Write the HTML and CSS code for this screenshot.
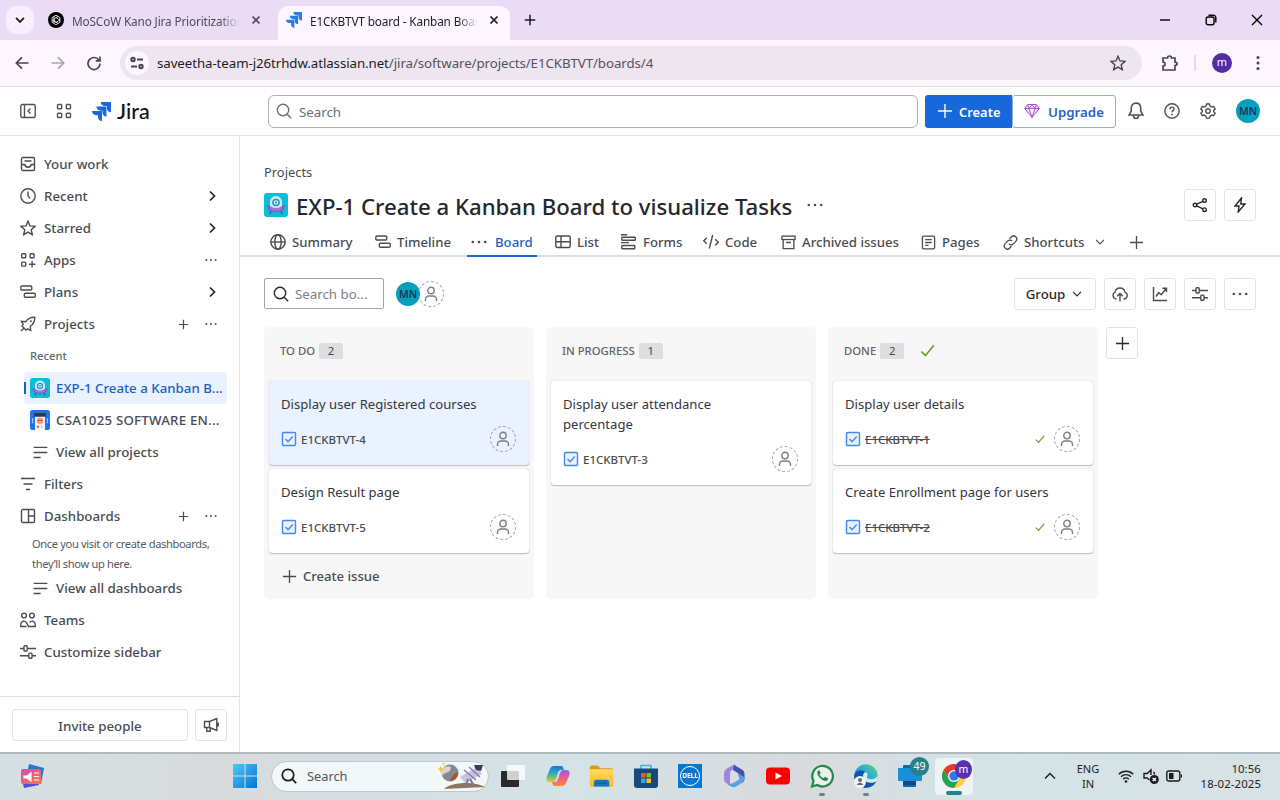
FILE: index.html
```html
<!DOCTYPE html>
<html lang="en">
<head>
<meta charset="utf-8">
<title>E1CKBTVT board - Kanban Board - Jira</title>
<link rel="stylesheet" href="styles.css">
</head>
<body>
<svg class="sprite" aria-hidden="true">
  <defs>
    <linearGradient id="wn" x1="0" y1="0" x2="1" y2="1"><stop offset="0" stop-color="#4cc8f8"/><stop offset="1" stop-color="#0473d4"/></linearGradient>
    <linearGradient id="fold" x1="0" y1="0" x2="0" y2="1"><stop offset="0" stop-color="#ffd968"/><stop offset="1" stop-color="#fcb924"/></linearGradient>
    <linearGradient id="edg" x1="0" y1="1" x2="1" y2="0"><stop offset="0" stop-color="#0f5eb0"/><stop offset="0.5" stop-color="#2aa5dc"/><stop offset="1" stop-color="#5fd878"/></linearGradient>
    <linearGradient id="m365" x1="0" y1="0" x2="1" y2="1"><stop offset="0" stop-color="#a58be8"/><stop offset="0.5" stop-color="#4a55b8"/><stop offset="1" stop-color="#62bdf2"/></linearGradient>
    <linearGradient id="cpa" x1="0" y1="0" x2="0" y2="1"><stop offset="0" stop-color="#1a6fe8"/><stop offset="0.5" stop-color="#2cb5b8"/><stop offset="1" stop-color="#e8c526"/></linearGradient>
    <linearGradient id="cpb" x1="0" y1="0" x2="0" y2="1"><stop offset="0" stop-color="#9a5ae8"/><stop offset="0.5" stop-color="#ee5a8c"/><stop offset="1" stop-color="#f58a3c"/></linearGradient>
    <linearGradient id="nws" x1="0" y1="0" x2="1" y2="1"><stop offset="0" stop-color="#d14bb5"/><stop offset="1" stop-color="#fb7a45"/></linearGradient>
  </defs>
  <symbol id="jira" viewBox="0 0 20 20"><g fill="currentColor" stroke="none"><path d="M9.200 0H20v10.800a4.700 4.700 0 0 1-4.300-4.600V4.300h-1.900A4.700 4.700 0 0 1 9.200 0z"/><path d="M4.600 4.800h10.600v10.600a4.700 4.700 0 0 1-4.200-4.600V9.100H9.200a4.700 4.700 0 0 1-4.600-4.300z"/><path d="M0 9.600h10.500V20a4.700 4.700 0 0 1-4.200-4.600v-1.500H4.600A4.700 4.700 0 0 1 0 9.600z"/></g></symbol>
  <symbol id="chev-d" viewBox="0 0 16 16"><path d="M3.500 5.500 8 10.200l4.500-4.700"/></symbol>
  <symbol id="chev-r" viewBox="0 0 16 16"><path d="m6 3.500 4.500 4.500L6 12.500"/></symbol>
  <symbol id="x" viewBox="0 0 16 16"><path d="m4 4 8 8M12 4l-8 8"/></symbol>
  <symbol id="plus" viewBox="0 0 16 16"><path d="M8 1v14M1 8h14"/></symbol>
  <symbol id="dots" viewBox="0 0 16 16"><g fill="currentColor" stroke="none"><circle cx="1.800" cy="8" r="1.300"/><circle cx="8" cy="8" r="1.300"/><circle cx="14.200" cy="8" r="1.300"/></g></symbol>
  <symbol id="search" viewBox="0 0 16 16"><circle cx="7" cy="7" r="5.700"/><path d="m11.200 11.200 4 4"/></symbol>
  <symbol id="star" viewBox="0 0 16 16"><path d="m8 1.200 2 4.700 5 .5-3.800 3.300 1.100 5L8 12.100l-4.300 2.600 1.100-5L1 6.400l5-.5z"/></symbol>
  <symbol id="inbox" viewBox="0 0 16 16"><rect x="1.500" y="1.500" width="13" height="13" rx="1.500"/><path d="M4.500 5h7M1.500 8.500h3.300c.4 2 1.500 2.700 3.200 2.700s2.800-.7 3.200-2.700h3.300"/></symbol>
  <symbol id="clock" viewBox="0 0 16 16"><circle cx="8" cy="8" r="7.200"/><path d="M8 3.500V8l2 2.200"/></symbol>
  <symbol id="grid" viewBox="0 0 16 16"><rect x="1.500" y="1.500" width="4.200" height="4.200" rx=".8"/><rect x="10.300" y="1.500" width="4.200" height="4.200" rx=".8"/><rect x="1.500" y="10.300" width="4.200" height="4.200" rx=".8"/><rect x="10.300" y="10.300" width="4.200" height="4.200" rx=".8"/></symbol>
  <symbol id="apps" viewBox="0 0 16 16"><rect x="1.700" y="1.700" width="4" height="4" rx=".8"/><rect x="10.100" y="1.700" width="4" height="4" rx=".8"/><rect x="1.700" y="10.100" width="4" height="4" rx=".8"/><path d="M12.100 9v6.400M8.900 12.200h6.400"/></symbol>
  <symbol id="plans" viewBox="0 0 16 16"><rect x=".8" y="2" width="11" height="4" rx="1.200"/><rect x="4.300" y="9.200" width="11" height="4" rx="1.200"/></symbol>
  <symbol id="rocket" viewBox="0 0 16 16"><path d="M14.700 1.300c-4.500-.3-6.800 1.300-9 4.400L1.500 5.300l1.700 3L2 10l4 4 1.700-1.200 3 1.700-.4-4.200c3.100-2.200 4.700-4.500 4.400-9zM4 11.900 1 14.900"/><circle cx="10.800" cy="5.200" r="1" fill="currentColor" stroke="none"/></symbol>
  <symbol id="lines" viewBox="0 0 16 16"><path d="M.7 2.500h14.600M.7 8h14.600M.7 13.300h7.500"/></symbol>
  <symbol id="filter" viewBox="0 0 16 16"><path d="M1 2.500h14M3.500 8h9M6 13.500h4"/></symbol>
  <symbol id="dash" viewBox="0 0 16 16"><rect x="1.500" y="1.500" width="13" height="13" rx="1.300"/><path d="M8.500 1.500v13M8.500 8h6"/></symbol>
  <symbol id="teams" viewBox="0 0 16 16"><circle cx="4" cy="3.500" r="2.400"/><circle cx="12" cy="3.500" r="2.400"/><path d="M6.500 14.500H.8V12a3 3 0 0 1 5.600-1.300l2.200 3.800h6.600V12a3 3 0 0 0-5.600-1.300"/></symbol>
  <symbol id="sliders" viewBox="0 0 16 16"><path d="M0 4.500h4M7.500 4.500H16M0 11.800h8.500M12 11.800h4"/><rect x="4" y="1.800" width="3.200" height="5.200" rx=".8"/><rect x="8.800" y="9.100" width="3.200" height="5.200" rx=".8"/></symbol>
  <symbol id="horn" viewBox="0 0 16 16"><path d="M1.500 4.500h5L13.800 1.500v12L6.500 10.500h-5zM6.500 4.500v6M3.700 10.500v3.800h3.500v-3.500M15.200 5.500v4"/></symbol>
  <symbol id="collapse" viewBox="0 0 16 16"><rect x=".8" y="1.500" width="14.400" height="13" rx="1.500"/><path d="M4.500 1.500v13M10.500 5.500 8 8l2.500 2.500"/></symbol>
  <symbol id="bell" viewBox="0 0 16 16"><path d="M8 1c2.700 0 4.200 1.900 4.200 4.500v2.700l2 3.300H1.800l2-3.300V5.500C3.800 2.900 5.300 1 8 1zM5.600 11.800c0 1.800 1 2.800 2.400 2.800s2.400-1 2.400-2.800"/></symbol>
  <symbol id="help" viewBox="0 0 16 16"><circle cx="8" cy="8" r="7.200"/><path d="M5.900 6.300c0-1.400.9-2.200 2.100-2.200s2.100.8 2.100 2c0 1.500-2.100 1.500-2.100 3.100"/><circle cx="8" cy="11.500" r=".9" fill="currentColor" stroke="none"/></symbol>
  <symbol id="gear" viewBox="0 0 16 16"><circle cx="8" cy="8" r="2.200"/><path d="M6.500 1h3l.5 2 1.700 1 2-.7 1.500 2.700L13.700 7.400v1.300l1.500 1.400-1.500 2.600-2-.6-1.700 1-.5 2h-3l-.5-2-1.700-1-2 .6L.8 10.100l1.500-1.400V7.400L.8 6l1.500-2.700 2 .7L6 3z"/></symbol>
  <symbol id="globe" viewBox="0 0 16 16"><circle cx="8" cy="8" r="7.200"/><ellipse cx="8" cy="8" rx="3.200" ry="7.200"/><path d="M.8 8h14.400"/></symbol>
  <symbol id="list" viewBox="0 0 16 16"><rect x=".8" y="2" width="14.400" height="11.500" rx="1.500"/><path d="M.8 7.700h14.400M6 2v11.500"/></symbol>
  <symbol id="forms" viewBox="0 0 16 16"><path d="M0 .8h6M0 8.600h8"/><rect x=".8" y="3.300" width="13.500" height="3" rx=".6"/><rect x=".8" y="11.500" width="13" height="3.300" rx=".6"/></symbol>
  <symbol id="code" viewBox="0 0 16 16"><path d="M3.800 3.800.8 6.800l3 3M12.200 5.200l3 3-3 3M9.700 1 6.300 14.500"/></symbol>
  <symbol id="archive" viewBox="0 0 16 16"><rect x="1" y="1.200" width="14" height="3.600"/><path d="M2.300 4.800v9.700h11.400V4.800M5.500 8h5"/></symbol>
  <symbol id="page" viewBox="0 0 16 16"><rect x="1.500" y="1.200" width="13" height="13.600" rx="1.500"/><path d="M4.500 5h7M4.500 8h7M4.500 11h3.500"/></symbol>
  <symbol id="link" viewBox="0 0 16 16"><path d="m7 4 1.800-1.900a3.300 3.300 0 0 1 5 4.400L11 9.500a3.200 3.200 0 0 1-4.700 0M9 12l-1.800 1.900a3.300 3.300 0 0 1-5-4.400L5 6.500a3.200 3.200 0 0 1 4.700 0"/></symbol>
  <symbol id="share" viewBox="0 0 16 16"><circle cx="3" cy="8" r="1.800"/><circle cx="12.500" cy="3.500" r="1.800"/><circle cx="12.500" cy="12.700" r="1.800"/><path d="m4.700 7.200 6.200-2.900M4.700 8.800l6.200 3"/></symbol>
  <symbol id="bolt" viewBox="0 0 16 16"><path d="M9.500 1 3 9h4l-.8 6L13 7H8.800z"/></symbol>
  <symbol id="cloud" viewBox="0 0 16 16"><path d="M4.500 13A3.600 3.600 0 0 1 3 6.200a5.100 5.100 0 0 1 10-.1 3.600 3.600 0 0 1-1.500 6.900M8 15.500V7.800M5.200 10.300 8 7.500l2.800 2.800"/></symbol>
  <symbol id="chart" viewBox="0 0 16 16"><path d="M1.500 1v13.500H15M4 10.500l2.700-4 2.600 2.300 4.900-6.300M10.500 2.300h4v4"/></symbol>
  <symbol id="person" viewBox="0 0 16 16"><circle cx="8" cy="4.500" r="3.200"/><path d="M2.500 15v-1.500a3.500 3.500 0 0 1 3.500-3.500h4a3.500 3.500 0 0 1 3.500 3.500V15"/></symbol>
  <symbol id="tick" viewBox="0 0 16 16"><path d="m1.500 9 4.300 4.500L14.800 2.500"/></symbol>
  <symbol id="task" viewBox="0 0 16 16"><rect x="1.500" y="1.500" width="13" height="13" rx="1" fill="#e9f2fe"/><path d="m4.500 8 2.600 2.800 4.600-5.300"/></symbol>
  <symbol id="alien" viewBox="0 0 24 24"><rect width="24" height="24" rx="3" fill="#0cbcdb"/><path d="m7 18-1 3M17 18l1 3" stroke="#5a46a5" stroke-width="1.500"/><path d="M3 11.500q2 1 3 .5h12q1 .5 3-.5c.5 5-3 8-9 8s-9.500-3-9-8z" fill="#7566c6"/><path d="M6 14V9a6 6 0 0 1 12 0v5q-6 4-12 0z" fill="#c6f1fa"/><circle cx="12" cy="9.500" r="3.800" fill="#3189b8"/><circle cx="12" cy="9.500" r="2.300" fill="#d7f6ff"/><circle cx="12" cy="9.500" r="1.100" fill="#3189b8"/><path d="M6 13q6 4 12 0v3q-6 4-12 0z" fill="#9a78d8"/></symbol>
  <symbol id="phone" viewBox="0 0 24 24"><rect width="24" height="24" rx="3" fill="#1f73ea"/><path d="M6 24V5a2 2 0 0 1 2-2h8a2 2 0 0 1 2 2v19z" fill="#f2f4fa"/><path d="M5 8V5a2 2 0 0 1 2-2h10a2 2 0 0 1 2 2v3z" fill="#253858"/><circle cx="12" cy="13" r="4" fill="#ff9580"/><circle cx="10.500" cy="12.500" r=".8" fill="#803030"/><circle cx="13.500" cy="12.500" r=".8" fill="#803030"/><path d="M3.500 10q-1.500 3 0 6M20.500 10q1.500 3 0 6" stroke="#a9d2ff" stroke-width="1.300" fill="none"/><circle cx="9.500" cy="20" r="1.400" fill="#f04438"/><circle cx="14" cy="20" r="1" fill="#8cbdc0"/></symbol>
</svg>

<div class="tabstrip">
  <div class="tab-search"><svg class="i s14 w2"><use href="#chev-d"/></svg></div>
  <div class="btab btab-idle">
    <svg class="gpt" viewBox="0 0 16 16"><circle cx="8" cy="8" r="8" fill="#000"/><g fill="none" stroke="#fff" stroke-width=".8"><path d="M8 3.200l3.900 2.300v4.800L8 12.700l-3.900-2.400V5.500z"/><path d="M6 4.400V9l4.200 2.400M10 4.400 5.900 6.800v4.600M4 8l4 2.300L12.100 8M8 5.600 12 8"/></g></svg>
    <span class="btab-title">MoSCoW Kano Jira Prioritization</span>
    <svg class="i s14 w2"><use href="#x"/></svg>
  </div>
  <div class="btab btab-active">
    <svg class="i s16 fav"><use href="#jira"/></svg>
    <span class="btab-title">E1CKBTVT board - Kanban Board</span>
    <svg class="i s14 w2"><use href="#x"/></svg>
  </div>
  <svg class="i newtab w2"><use href="#plus"/></svg>
  <div class="winctl">
    <svg class="i s12" viewBox="0 0 12 12"><path d="M1 6h10"/></svg>
    <svg class="i s12" viewBox="0 0 12 12"><rect x="1.200" y="3" width="7.800" height="7.800" rx="1.800"/><path d="M3.500 1.200h5a2.300 2.300 0 0 1 2.300 2.300v5"/></svg>
    <svg class="i s12" viewBox="0 0 12 12"><path d="m1 1 10 10M11 1 1 11"/></svg>
  </div>
</div>

<div class="toolbar">
  <svg class="i s16" viewBox="0 0 16 16"><path d="M14.500 8H2.500M8 2.300 2.300 8 8 13.700"/></svg>
  <svg class="i s16 dim" viewBox="0 0 16 16"><path d="M1.500 8h12M8 2.300 13.700 8 8 13.700"/></svg>
  <svg class="i s16" viewBox="0 0 16 16"><path d="M13 5.200A6 6 0 1 0 14 8.500M14 1.500v4.300H9.700"/></svg>
  <div class="omni">
    <span class="site"><svg class="i s14 w2" viewBox="0 0 14 14"><circle cx="3" cy="3.500" r="1.700"/><path d="M7 3.500h6M1 10.500h6"/><circle cx="11" cy="10.500" r="1.700"/></svg></span>
    <span class="url"><b>saveetha-team-j26trhdw.atlassian.net</b>/jira/software/projects/E1CKBTVT/boards/4</span>
    <svg class="i s16"><use href="#star"/></svg>
  </div>
  <svg class="i ext" viewBox="0 0 18 18"><path d="M2 4h4.500c0-2.700 4-2.700 4 0H14v4.200c2.700 0 2.700 3.300 0 3.300V16H2v-3.800c2.700 0 2.700-4.200 0-4.200z"/></svg>
  <span class="sep"></span>
  <span class="me">m</span>
  <svg class="i kebab" viewBox="0 0 4 16"><g fill="currentColor" stroke="none"><circle cx="2" cy="2.500" r="1.500"/><circle cx="2" cy="8" r="1.500"/><circle cx="2" cy="13.500" r="1.500"/></g></svg>
</div>

<header class="nav">
  <svg class="i s16"><use href="#collapse"/></svg>
  <svg class="i s16 nav-grid"><use href="#grid"/></svg>
  <div class="brand"><svg class="brand-mark"><use href="#jira"/></svg><span>Jira</span></div>
  <div class="gsearch"><svg class="i s16"><use href="#search"/></svg><span>Search</span></div>
  <div class="create"><svg class="i s16"><use href="#plus"/></svg><span>Create</span></div>
  <div class="upgrade"><svg class="i gem" viewBox="0 0 16 16"><path fill="#eed7fc" d="M3.500 1.500h9L15.300 5.500 8 14.500.7 5.500zM.7 5.500h14.600M5 5.500l3 9 3-9M3.500 1.500 5 5.500l3-4 3 4 1.500-4"/></svg><span>Upgrade</span></div>
  <svg class="i s18"><use href="#bell"/></svg>
  <svg class="i s16 nav-help"><use href="#help"/></svg>
  <svg class="i s16 nav-gear"><use href="#gear"/></svg>
  <span class="mn">MN</span>
</header>

<div class="body">
  <aside class="side">
    <nav class="menu">
      <div class="row"><svg class="i s16"><use href="#inbox"/></svg><span>Your work</span></div>
      <div class="row"><svg class="i s16"><use href="#clock"/></svg><span>Recent</span><svg class="i s16 end arrow"><use href="#chev-r"/></svg></div>
      <div class="row"><svg class="i s16"><use href="#star"/></svg><span>Starred</span><svg class="i s16 end arrow"><use href="#chev-r"/></svg></div>
      <div class="row"><svg class="i s16"><use href="#apps"/></svg><span>Apps</span><svg class="i s12 end more"><use href="#dots"/></svg></div>
      <div class="row"><svg class="i s16"><use href="#plans"/></svg><span>Plans</span><svg class="i s16 end arrow"><use href="#chev-r"/></svg></div>
      <div class="row"><svg class="i s16"><use href="#rocket"/></svg><span>Projects</span><svg class="i s11 end"><use href="#plus"/></svg><svg class="i s12 more"><use href="#dots"/></svg></div>
      <div class="row sub-label">Recent</div>
      <div class="row sub picked"><svg class="ava"><use href="#alien"/></svg><span>EXP-1 Create a Kanban B...</span></div>
      <div class="row sub wide"><svg class="ava"><use href="#phone"/></svg><span>CSA1025 SOFTWARE EN...</span></div>
      <div class="row sub all"><svg class="i s15"><use href="#lines"/></svg><span>View all projects</span></div>
      <div class="row"><svg class="i s16"><use href="#filter"/></svg><span>Filters</span></div>
      <div class="row"><svg class="i s16"><use href="#dash"/></svg><span>Dashboards</span><svg class="i s11 end"><use href="#plus"/></svg><svg class="i s12 more"><use href="#dots"/></svg></div>
      <p class="hint">Once you visit or create dashboards,<br>they’ll show up here.</p>
      <div class="row sub all"><svg class="i s15"><use href="#lines"/></svg><span>View all dashboards</span></div>
      <div class="row"><svg class="i s16"><use href="#teams"/></svg><span>Teams</span></div>
      <div class="row"><svg class="i s16"><use href="#sliders"/></svg><span>Customize sidebar</span></div>
    </nav>
    <div class="side-foot"><div class="invite">Invite people</div><div class="sq"><svg class="i s16"><use href="#horn"/></svg></div></div>
  </aside>

  <main class="main">
    <div class="crumb">Projects</div>
    <div class="title-row">
      <svg class="proj"><use href="#alien"/></svg>
      <h1>EXP-1 Create a Kanban Board to visualize Tasks</h1>
      <svg class="i s16 title-dots"><use href="#dots"/></svg>
      <div class="sq dark push"><svg class="i s16"><use href="#share"/></svg></div>
      <div class="sq dark"><svg class="i s16"><use href="#bolt"/></svg></div>
    </div>
    <div class="tabs">
      <div class="tab t-summary"><svg class="i s16"><use href="#globe"/></svg>Summary</div>
      <div class="tab t-timeline"><svg class="i s16"><use href="#plans"/></svg>Timeline</div>
      <div class="tab t-board"><svg class="i s16"><use href="#dots"/></svg>Board</div>
      <div class="tab t-list"><svg class="i s16"><use href="#list"/></svg>List</div>
      <div class="tab t-forms"><svg class="i s16"><use href="#forms"/></svg>Forms</div>
      <div class="tab t-code"><svg class="i s16"><use href="#code"/></svg>Code</div>
      <div class="tab t-arch"><svg class="i s15"><use href="#archive"/></svg>Archived issues</div>
      <div class="tab t-pages"><svg class="i s15"><use href="#page"/></svg>Pages</div>
      <div class="tab t-short"><svg class="i s15"><use href="#link"/></svg>Shortcuts<svg class="i s14 short-chev"><use href="#chev-d"/></svg></div>
      <svg class="i s15"><use href="#plus"/></svg>
    </div>
    <div class="tools">
      <div class="bsearch"><svg class="i s16"><use href="#search"/></svg><span>Search bo...</span></div>
      <div class="people"><span class="mn">MN</span><span class="anon"><svg class="i s16"><use href="#person"/></svg></span></div>
      <div class="group">Group<svg class="i s14"><use href="#chev-d"/></svg></div>
      <div class="sq"><svg class="i s16"><use href="#cloud"/></svg></div>
      <div class="sq"><svg class="i s16"><use href="#chart"/></svg></div>
      <div class="sq"><svg class="i s16"><use href="#sliders"/></svg></div>
      <div class="sq"><svg class="i s16"><use href="#dots"/></svg></div>
    </div>
    <div class="board">
      <section class="col">
        <div class="col-head">TO DO<span class="count">2</span></div>
        <article class="card sel"><div class="card-title">Display user Registered courses</div><div class="meta"><svg class="i s16 task"><use href="#task"/></svg><span class="key">E1CKBTVT-4</span><span class="anon"><svg class="i s16"><use href="#person"/></svg></span></div></article>
        <article class="card"><div class="card-title">Design Result page</div><div class="meta"><svg class="i s16 task"><use href="#task"/></svg><span class="key">E1CKBTVT-5</span><span class="anon"><svg class="i s16"><use href="#person"/></svg></span></div></article>
        <div class="new-issue"><svg class="i s15"><use href="#plus"/></svg>Create issue</div>
      </section>
      <section class="col">
        <div class="col-head">IN PROGRESS<span class="count">1</span></div>
        <article class="card"><div class="card-title">Display user attendance percentage</div><div class="meta"><svg class="i s16 task"><use href="#task"/></svg><span class="key">E1CKBTVT-3</span><span class="anon"><svg class="i s16"><use href="#person"/></svg></span></div></article>
      </section>
      <section class="col">
        <div class="col-head">DONE<span class="count">2</span><svg class="i s15 green head-tick"><use href="#tick"/></svg></div>
        <article class="card"><div class="card-title">Display user details</div><div class="meta"><svg class="i s16 task"><use href="#task"/></svg><span class="key struck">E1CKBTVT-1</span><svg class="i s10 green"><use href="#tick"/></svg><span class="anon"><svg class="i s16"><use href="#person"/></svg></span></div></article>
        <article class="card"><div class="card-title">Create Enrollment page for users</div><div class="meta"><svg class="i s16 task"><use href="#task"/></svg><span class="key struck">E1CKBTVT-2</span><svg class="i s10 green"><use href="#tick"/></svg><span class="anon"><svg class="i s16"><use href="#person"/></svg></span></div></article>
      </section>
      <div class="sq add-col"><svg class="i s15"><use href="#plus"/></svg></div>
    </div>
  </main>
</div>

<footer class="taskbar">
  <svg class="news" viewBox="0 0 24 24"><path d="m9 0 15 4-3 16L6 16z" fill="#2476cf"/><path d="m1 12 14-3 4 12L4 24z" fill="#5b49d8"/><rect x="1" y="5" width="20" height="15" rx="2" fill="url(#nws)"/><path d="M4 12h3l4-3v8l-4-3H4zM14 9h5M14 12.500h5M14 16h5" fill="#fff" stroke="#fff" stroke-width="1.200"/></svg>
  <svg class="win" viewBox="0 0 24 24"><path fill="url(#wn)" d="M0 0h11.500v11.500H0zM12.500 0H24v11.500H12.500zM0 12.500h11.500V24H0zM12.500 12.500H24V24H12.500z"/></svg>
  <div class="tsearch"><svg class="i s16"><use href="#search"/></svg><span>Search</span>
    <svg class="art" viewBox="0 0 50 26"><path d="M8 26c8-7 30-8 41-2z" fill="#8f7463"/><circle cx="14" cy="10" r="8.500" fill="#7f8b91"/><path d="M6 13c4-6 8-1 9-9-6-3-11 3-9 9z" fill="#ddd2ca"/><path d="M13 18c6 0 9-4 9-9-4 1-5 4-9 9z" fill="#b34d35"/><path d="m24 14 17-10 5 7-17 9z" fill="#c9c2de"/><path d="m38 2 9 0-2 6-5-1z" fill="#393b5e"/><path d="m28 7 12 10M33 4l11 10" stroke="#837ba6" stroke-width="1.300"/><path d="m32 16-2 8M34 16l4 7" stroke="#80739d" stroke-width="2"/><path d="M2 6h5M4.500 3.500v5M6 1h3" stroke="#edb52c" stroke-width="1.200"/></svg>
  </div>
  <svg class="app a-view" viewBox="0 0 24 24"><rect x="0" y="7" width="18" height="16" rx="1" fill="#292929"/><rect x="6" y="1" width="18" height="15" rx="1" fill="#fff" opacity=".78"/></svg>
  <svg class="app a-cop" viewBox="0 0 24 24"><path d="M8 2h7c2 0 2.500 2 3 4h-3c-2 0-3 2-4 6s-2 6-5 6H4c-4 0-4-3-3-6L4 5c.8-2 2-3 4-3z" fill="url(#cpa)"/><path d="M16 22H9c-2 0-2.500-2-3-4h3c2 0 3-2 4-6s2-6 5-6h2c4 0 4 3 3 6l-3 7c-.8 2-2 3-4 3z" fill="url(#cpb)"/></svg>
  <svg class="app a-fold" viewBox="0 0 26 24"><path d="M1 3q0-2 2-2h6l3 3h11q2 0 2 2v15q0 2-2 2H3q-2 0-2-2z" fill="#d99b13"/><rect x="1" y="5" width="24" height="18" rx="1.500" fill="url(#fold)"/><path d="M5 23v-4q0-3 3-3h10q3 0 3 3v4z" fill="#1375c8"/><path d="M8 19.500h10" stroke="#095396"/></svg>
  <svg class="app a-store" viewBox="0 0 24 24"><path d="M7 5V1.500h10V5" fill="none" stroke="#36b4e8" stroke-width="1.500"/><path d="M0 4.500h24V21q0 3-3 3H3q-3 0-3-3z" fill="#164a7d"/><path d="M7 9h4.500v4.500H7z" fill="#f15a2c"/><path d="M12.500 9H17v4.500h-4.500z" fill="#80bd29"/><path d="M7 14.500h4.500V19H7z" fill="#2eabe6"/><path d="M12.500 14.500H17V19h-4.500z" fill="#fdbb23"/></svg>
  <div class="app dell"><span>DELL</span></div>
  <svg class="app a-m365" viewBox="0 0 24 24"><path d="M13 0 5 4.500Q2 6.500 2 10v5q0 3 3 4.500l3 1.500V9q0-2 2-3l4-2.500z" fill="#9d86e3"/><path d="m12 1 8 4.500q2.500 1.500 2.500 4V15q0 2.500-2 4l-4-7V9.500L11 6z" fill="#4651ae"/><path d="M22 13q1 4-3 6.500l-5 3q-2 1.500-5 0l-4-2.500q5 .5 8-2l4-2.500V10z" fill="#5c9fe6"/></svg>
  <svg class="app a-yt" viewBox="0 0 24 24"><rect y="3.500" width="24" height="17" rx="4" fill="#f00"/><path d="m9.500 8.500 6.500 3.500-6.500 3.500z" fill="#fff"/></svg>
  <div class="app run"><svg viewBox="0 0 24 24"><path d="M2 22.500 3.500 17A10.300 10.300 0 1 1 7.300 21z" fill="#e7f2eb" stroke="#24854e" stroke-width="2.200"/><path d="M8.500 6.500c-2 1.300-1.500 4.500 1.500 7.500s6.500 4 7.800 1.800l.2-1.500-3-1.500-1.400 1.500c-2-.8-3.300-2-4.100-4l1.200-1.200L9.500 6.500z" fill="#24854e"/></svg></div>
  <div class="app run"><svg viewBox="0 0 24 24"><circle cx="12" cy="12" r="11.700" fill="url(#edg)"/><path d="M.3 12C1 6 8 5.500 11.500 8 9 9 8 13 10.500 16s7 3.500 11.500 1.500C20 22 15 24.500 10 23.500 4 22 .3 18 .3 12z" fill="#0d58a6"/><path d="M11.500 8c3 1.500 2 4 1.500 5 0 2 3 2.500 6 2 2.500-.4 4.500-2 4.700-4 .3 3-.2 5-1.700 6.500-4.500 2-9 1.500-11.500-1.500S9 9 11.500 8z" fill="#dbe9ee"/><circle cx="6" cy="18" r="6" fill="#f3f3f3"/><circle cx="6" cy="16" r="2" fill="#6b6b6b"/><path d="M2.500 21q3.500-5 7 0z" fill="#6b6b6b"/></svg></div>
  <div class="app phonelink"><svg viewBox="0 0 24 24"><rect x="5" y="1" width="13" height="22" rx="1" fill="#0b69b2"/><rect x="0" y="4" width="24" height="13" rx="1" fill="#178fda"/><path d="M5 17h13v4H5z" fill="#084b86"/></svg><span class="badge teal">49</span></div>
  <div class="app chrome"><svg viewBox="0 0 24 24"><circle cx="12" cy="12" r="12" fill="#ffcd40"/><path d="M1.600 6A12 12 0 0 1 22.400 6H12z" fill="#e33b2e"/><path d="M1.600 6 6.800 15 12 6z" fill="#e33b2e"/><path d="M6.800 15 1.600 6A12 12 0 0 0 12 24l5.200-9z" fill="#21a35a"/><circle cx="12" cy="12" r="6" fill="#fff"/><circle cx="12" cy="12" r="4.700" fill="#3178e8"/></svg><span class="badge violet">m</span></div>
  <div class="tray">
    <svg class="i s12 caret" viewBox="0 0 12 12"><path d="m1 8.500 5-5 5 5"/></svg>
    <div class="lang">ENG<br>IN</div>
    <svg class="i s16 wifi" viewBox="0 0 16 16"><path d="M.8 6.200a10.200 10.200 0 0 1 14.400 0M3 8.700a7 7 0 0 1 10 0M5.200 11.200a4 4 0 0 1 5.600 0"/><circle cx="8" cy="13.500" r="1.300" fill="currentColor" stroke="none"/></svg>
    <svg class="i s16 vol" viewBox="0 0 16 16"><path d="M6.500 12 4.300 10H1V5.500h3.300L8 2v5M10.500 4q1 1 1 2.500"/><circle cx="11.300" cy="11.500" r="4.500" fill="#1b1b1b" stroke="none"/><path d="m9.700 9.900 3.200 3.200M12.900 9.900l-3.200 3.200" stroke="#fff"/></svg>
    <svg class="i s16 bat" viewBox="0 0 16 16"><rect x=".8" y="3" width="13" height="10" rx="2"/><path d="M15.500 6.500v3"/><rect x="3" y="5" width="4.500" height="6" fill="currentColor" stroke="none"/></svg>
    <div class="time">10:56<br>18-02-2025</div>
  </div>
</footer>
</body>
</html>
```
FILE: styles.css
```css
* { box-sizing: border-box; }
body {
  margin: 0;
  width: 1280px;
  height: 800px;
  overflow: hidden;
  display: flex;
  flex-direction: column;
  font-family: "Noto Sans", "Open Sans", sans-serif;
  font-size: 13.3px;
  color: #494c52;
  background: #fff;
}
svg { display: block; flex: none; }
.sprite { position: absolute; width: 0; height: 0; }
.i { fill: none; stroke: currentColor; stroke-width: 1.4; }
.w2 { stroke-width: 2; }
.s10 { width: 10px; height: 10px; }
.s11 { width: 11px; height: 11px; stroke-width: 1.8; }
.s12 { width: 12px; height: 12px; }
.s14 { width: 14px; height: 14px; }
.s15 { width: 15px; height: 15px; }
.s16 { width: 16px; height: 16px; }
.s18 { width: 18px; height: 18px; }
.dark { color: #24262b; }
.green { color: #6a9a23; stroke-width: 1.7; }

/* Browser window */
.tabstrip { height: 40px; flex: none; display: flex; background: #eadcf4; color: #1f1a24; align-items: center; }
.tab-search { width: 28px; height: 28px; margin-left: 6px; border-radius: 10px; background: #f8effc; display: grid; place-items: center; }
.btab { display: flex; align-items: center; flex: none; }
.btab-idle { width: 244px; padding-left: 14px; color: #51485a; }
.gpt { width: 16px; height: 16px; }
.btab-title { width: 168px; margin: 0 9px 0 8px; padding-top: 2px; font-size: 11.8px; letter-spacing: -.15px; white-space: nowrap; overflow: hidden; mask-image: linear-gradient(90deg, #000 88%, transparent); }
.btab-active { width: 232px; height: 34px; align-self: flex-end; padding: 0 0 6px 8px; background: #fdf6fe; border-radius: 10px 10px 0 0; }
.fav { color: #2b7de9; }
.newtab { width: 12px; height: 12px; margin-left: 14px; }
.winctl { margin-left: auto; margin-right: 17px; display: flex; gap: 34px; color: #000; }
.toolbar { height: 47px; flex: none; display: flex; align-items: center; background: #fdf6fe; border-bottom: 1px solid #e6dfeb; padding: 0 20px 0 14px; color: #4a444f; }
.toolbar > .s16 { margin-right: 20px; stroke-width: 1.7; }
.toolbar > .dim { color: #aaa2ae; }
.omni { width: 1022px; height: 34px; margin-left: -2px; border-radius: 17px; background: #ede6f1; display: flex; align-items: center; padding: 0 16px 0 5px; }
.site { width: 24px; height: 24px; border-radius: 50%; background: #fdf6fe; display: grid; place-items: center; }
.url { margin-left: 8px; flex: 1; font-size: 13.3px; color: #56505c; letter-spacing: -.08px; }
.url b { font-weight: 400; color: #1d1a21; }
.ext { width: 18px; height: 18px; margin-left: 19px; stroke-width: 1.7; }
.sep { width: 2px; height: 16px; margin-left: 15px; background: #e6d8f3; }
.me { width: 20px; height: 20px; margin-left: 16px; border-radius: 50%; background: #512da8; color: #fff; font-size: 11px; line-height: 18px; text-align: center; }
.kebab { width: 4px; height: 16px; margin-left: 24px; }

/* Product navigation */
.nav { height: 49px; flex: none; display: flex; align-items: center; padding: 0 20px; border-bottom: 1px solid #e4e5e8; color: #505258; }
.nav-grid { margin-left: 20px; }
.brand { display: flex; align-items: center; margin-left: 20px; width: 176px; gap: 6px; color: #101214; font: 500 21.5px Lato, sans-serif; }
.brand-mark { width: 19px; height: 19px; color: #1868db; }
.gsearch { width: 650px; height: 33px; border: 1px solid #aeb1b8; border-radius: 6px; display: flex; align-items: center; padding-left: 7px; gap: 7px; color: #6b6e76; font-size: 13.3px; }
.gsearch span, .create span, .upgrade span { padding-top: 2px; }
.create { width: 87px; height: 33px; margin-left: 7px; background: #1868db; color: #fff; border-radius: 3px 0 0 3px; display: flex; align-items: center; padding-left: 12px; gap: 6px; font-weight: 600; font-size: 12.900px; }
.upgrade { width: 104px; height: 33px; border: 1px solid #8fb1dc; border-radius: 3px; display: flex; align-items: center; padding-left: 11px; gap: 8px; color: #2764c5; font-weight: 600; font-size: 13.3px; }
.gem { width: 16px; height: 16px; color: #ae55d8; stroke-width: 1; }
.nav > .s18 { margin-left: 11px; }
.nav-help { margin-left: 19px; }
.nav-gear { margin-left: 20px; }
.mn { width: 24px; height: 24px; border-radius: 50%; background: #06a0bd; color: #15355a; font-size: 10.5px; font-weight: 600; line-height: 24px; text-align: center; flex: none; }
.nav .mn { margin-left: 20px; }

/* Sidebar */
.body { flex: 1; min-height: 0; display: flex; }
.side { width: 240px; border-right: 1px solid #e2e3e6; display: flex; flex-direction: column; }
.menu { padding-top: 12px; flex: 1; font-weight: 500; }
.row { height: 32px; display: flex; align-items: center; padding: 0 20px; gap: 8px; }
.end { margin-left: auto; }
.arrow { margin-right: -1px; color: #24262b; stroke-width: 1.7; }
.row .more { margin: 0 2px 0 8px; }
.row .more.end { margin-left: auto; }
.sub-label { padding-left: 30px; padding-bottom: 2px; font-size: 11.2px; color: #62656b; }
.sub { padding-left: 30px; padding-right: 0; gap: 6px; white-space: nowrap; }
.wide { letter-spacing: .2px; }
.sub .ava { width: 20px; height: 20px; }
.picked { margin: 0 12px 0 24px; padding-left: 6px; background: #e9f2fe; border-radius: 4px; color: #1f5fc4; background-image: linear-gradient(#1f5fc4, #1f5fc4); background-size: 2px 12px; background-repeat: no-repeat; background-position: 0 50%; }
.all { padding-left: 33px; gap: 8px; }
.hint { margin: 0; height: 40px; padding: 2px 0 0 32px; font-size: 11.1px; letter-spacing: -.34px; line-height: 20px; font-weight: 400; color: #54575e; white-space: nowrap; }
.side-foot { height: 56px; border-top: 1px solid #dddee1; display: flex; gap: 7px; padding: 12px 12px 0; }
.sq, .invite, .group { height: 32px; border: 1px solid #e2e3e6; border-radius: 3px; display: grid; place-items: center; }
.sq { width: 32px; flex: none; }
.invite { flex: 1; font-weight: 500; padding-top: 1px; }

/* Project header */
.main { flex: 1; min-width: 0; }
.crumb { height: 20px; margin: 26px 0 0 24px; line-height: 20px; font-size: 12.900px; }
.title-row { display: flex; align-items: center; height: 32px; margin-top: 7px; padding: 0 24px; }
.proj { width: 24px; height: 24px; }
h1 { margin: 0 0 0 8px; padding-top: 3px; font-size: 22.2px; line-height: 32px; font-weight: 500; color: #25272c; white-space: nowrap; }
.title-dots { margin-left: 15px; }
.push { margin-left: auto; margin-right: 8px; }
.tabs { height: 36px; display: flex; align-items: center; padding: 8px 0 0 30px; border-bottom: 2px solid #dddee1; font-weight: 500; font-size: 13.2px; }
.tab { display: flex; align-items: center; gap: 6px; flex: none; white-space: nowrap; }
.t-summary { width: 105px; }
.t-timeline { width: 92px; }
.t-board { width: 70px; height: 30px; padding: 2px 4px 0; gap: 8px; margin-right: 18px; border-bottom: 2px solid #1f66d0; color: #1f5fc4; }
.t-board .i { color: #44474d; }
.t-list { width: 66px; }
.t-forms { width: 82px; }
.t-code { width: 78px; }
.t-arch { width: 140px; }
.t-pages { width: 82px; }
.t-short { width: 126px; }
.short-chev { margin-left: 3px; }

/* Board controls */
.tools { display: flex; align-items: center; margin-top: 20px; padding: 0 24px; height: 33px; gap: 8px; }
.bsearch { width: 120px; height: 31px; border: 1px solid #a0a3a9; border-radius: 2px; display: flex; align-items: center; padding-left: 8px; gap: 6px; color: #7d8087; }
.bsearch .i { color: #24262b; }
.people { display: flex; margin-left: 4px; margin-right: auto; align-items: center; }
.anon { width: 26px; height: 26px; border: 1px dashed #9b9ea4; border-radius: 50%; display: grid; place-items: center; color: #7c7f86; flex: none; }
.people .anon { margin-left: -2px; }
.people .mn { position: relative; }
.group { width: 82px; display: flex; align-items: center; justify-content: center; gap: 5px; font-weight: 500; color: #292a2e; }

/* Board */
.board { display: flex; gap: 12px; margin: 17px 0 0 24px; align-items: flex-start; }
.col { width: 270px; height: 272px; background: #f7f7f7; border-radius: 5px; padding: 0 5px; }
.col-head { height: 54px; padding: 0 0 7px 11px; display: flex; align-items: center; font-size: 11.3px; color: #626468; font-weight: 500; }
.count { width: 24px; height: 16px; margin-left: 4px; background: #dddee1; border-radius: 2px; text-align: center; line-height: 16px; font-weight: 400; color: #44474d; }
.head-tick { margin-left: 16px; }
.card { background: #fff; border-radius: 3px; padding: 13px 13px 13px 12px; margin-bottom: 4px; box-shadow: 0 1px 1px #1e1f2140, 0 0 1px #1e1f2150; }
.sel { background: #e9f2fe; }
.card-title { width: 212px; line-height: 20px; font-size: 13.1px; color: #34363b; }
.meta { display: flex; align-items: center; height: 26px; margin: 12px 0 0; }
.task { color: #4688ec; }
.key { margin-left: 4px; margin-right: auto; font-size: 11.5px; font-weight: 500; }
.struck { text-decoration: line-through; }
.meta .s10 { margin-right: 9px; }
.new-issue { height: 37px; display: flex; align-items: center; gap: 6px; padding: 1px 0 0 13px; font-weight: 500; font-size: 13.1px; }
.add-col { margin-left: -4px; color: #292a2e; }

/* Taskbar */
.taskbar { height: 48px; flex: none; border-top: 2px solid #b0babd; padding-bottom: 2px; background: linear-gradient(90deg, #d5dfe1, #d8dbde 17%, #d3e3e6 45%, #d9dadd 62%, #d3e4e7 76%, #d8e2e5); display: flex; align-items: center; color: #222; }
.taskbar .i { color: #1b1b1b; }
.news { width: 24px; height: 24px; margin-left: 20px; }
.win { width: 24px; height: 24px; margin-left: 189px; }
.tsearch { width: 218px; height: 31px; margin-left: 14px; border-radius: 16px; border: 1px solid #bec8cb; background: #f2f7f8; display: flex; align-items: center; padding-left: 9px; gap: 10px; color: #53565a; font-size: 12.8px; }
.tsearch .i { stroke-width: 1.7; }
.art { width: 50px; height: 26px; margin-left: auto; margin-right: 2px; }
.app { width: 24px; height: 24px; margin-left: 22px; flex: none; position: relative; }
.app > svg { width: 24px; height: 24px; }
.a-view { margin-left: 12px; }
.a-cop { margin-left: 21px; }
.a-fold { width: 25px; margin-left: 19px; }
.a-store { margin-left: 20px; }
.a-m365, .a-yt { margin-left: 20px; }
.dell { margin-left: 20px; background: #0876ce; display: grid; place-items: center; }
.dell span { width: 20px; height: 20px; border: 1px solid #fff; border-radius: 50%; color: #fff; font-size: 6.5px; font-weight: 700; line-height: 18px; text-align: center; }
.run { margin-left: 20px; }
.run::after { content: ""; position: absolute; left: 9px; bottom: -8px; width: 6px; height: 3px; border-radius: 2px; background: #777e82; }
.phonelink { margin-left: 20px; }
.badge { position: absolute; left: 12px; top: -7px; width: 19px; height: 19px; border-radius: 50%; color: #fff; font-size: 10.5px; line-height: 18px; text-align: center; }
.teal { background: #28808b; }
.violet { background: #5931ad; left: 20px; top: 2px; width: 17px; height: 19px; }
.chrome { width: 38px; height: 37px; margin-left: 13px; border-radius: 4px; background: #eef3f6; display: grid; place-items: center; }
.chrome::after { content: ""; position: absolute; left: 11px; bottom: 0; width: 16px; height: 4px; border-radius: 2px; background: #28808b; }
.tray { margin-left: auto; display: flex; align-items: center; margin-right: 19px; font-size: 11.1px; line-height: 15px; }
.caret { margin-right: 20px; }
.lang { width: 24px; text-align: center; }
.wifi { margin-left: 18px; }
.vol { margin-left: 9px; }
.bat { margin-left: 7px; }
.time { width: 66px; margin-left: 13px; text-align: right; white-space: nowrap; font-size: 11.4px; letter-spacing: .1px; }
```
